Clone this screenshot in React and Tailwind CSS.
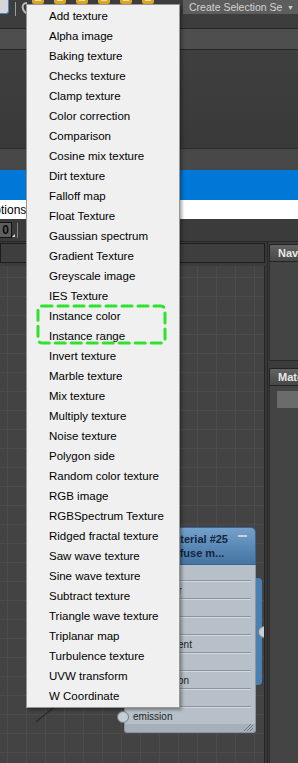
import React from 'react';

const menuItems = [
  'Add texture',
  'Alpha image',
  'Baking texture',
  'Checks texture',
  'Clamp texture',
  'Color correction',
  'Comparison',
  'Cosine mix texture',
  'Dirt texture',
  'Falloff map',
  'Float Texture',
  'Gaussian spectrum',
  'Gradient Texture',
  'Greyscale image',
  'IES Texture',
  'Instance color',
  'Instance range',
  'Invert texture',
  'Marble texture',
  'Mix texture',
  'Multiply texture',
  'Noise texture',
  'Polygon side',
  'Random color texture',
  'RGB image',
  'RGBSpectrum Texture',
  'Ridged fractal texture',
  'Saw wave texture',
  'Sine wave texture',
  'Subtract texture',
  'Triangle wave texture',
  'Triplanar map',
  'Turbulence texture',
  'UVW transform',
  'W Coordinate',
];

const nodeRows = ['base_color', 'reflection', 'roughness', 'displacement', 'opacity', 'transmission', 'bump', 'emission'];

const ToolIcon = () => (
  <svg width="14" height="14" viewBox="0 0 14 14" className="shrink-0">
    <rect x="1" y="1" width="12" height="12" rx="2" fill="#d9a52a" />
    <rect x="4" y="4" width="6" height="6" fill="#f4e08a" />
  </svg>
);

const NodeCard = () => (
  <div className="absolute left-[124px] top-[261px] w-[132px]">
    <div className="relative h-[38px] overflow-hidden rounded-t-[5px] border border-[#3b6590] bg-gradient-to-b from-[#74a1cb] to-[#4574a3] pl-[40px] pt-[4px] text-[11px] font-bold leading-[14px] text-[#13263d]">
      <div className="whitespace-nowrap">Material #25</div>
      <div className="whitespace-nowrap">Diffuse m...</div>
      <span className="absolute right-[8px] top-[7px] h-[2px] w-[9px] bg-[#c9d3dd]" />
    </div>
    <div className="border-x border-[#8a97a4] bg-[#b7c0c8] pt-[15px]">
      {nodeRows.map((label) => (
        <div key={label} className="mx-[4px] flex h-[18px] items-center whitespace-nowrap border-t border-[#8c959d] pl-[4px] pt-[2px] text-[10px] text-[#1c1f22] shadow-[inset_0_1px_0_#d3d9df]">
          {label}
        </div>
      ))}
    </div>
    <div className="relative h-[9px] rounded-b-[3px] border border-t-0 border-[#8793a0] bg-[#a7b0b8]">
      <svg width="12" height="7" viewBox="0 0 12 7" className="absolute bottom-[1px] right-[2px]">
        <path d="M3 7 L10 0 M6 7 L12 1 M9 7 L12 4" stroke="#6f7a85" strokeWidth="1" />
      </svg>
    </div>
    <div className="absolute left-[132px] top-[51px] h-[107px] w-[6px] rounded-r-[4px] bg-[#4a7fb1]" />
    <div className="absolute left-[134px] top-[99px] h-[12px] w-[12px] rounded-full border border-[#6f7f90] bg-[#c7ced6]" />
    <div className="absolute left-[-7px] top-[184px] h-[12px] w-[12px] rounded-full border border-[#6f7f90] bg-[#c5cdd5]" />
  </div>
);

export default function App() {
  return (
    <div className="relative h-[763px] w-[298px] overflow-hidden bg-[#3c3c3c] font-['Liberation_Sans',Arial,sans-serif]">
      {/* top toolbar */}
      <div className="flex h-[28px] items-start overflow-hidden bg-[#3d3d3d]">
        <div className="h-[14px] w-[9px] shrink-0 rounded-br-[3px] border-b border-r border-[#4d84d1] bg-[#d6d6d6]" />
        <div className="ml-[6px] mt-[2px] h-[14px] w-px shrink-0 bg-[#9c9c9c]" />
        <svg width="8" height="14" viewBox="0 0 8 14" className="ml-[5px] mt-[1px] shrink-0">
          <path d="M6 2 C2 2 1 5 2 8 C3 11 5 12 6 12" stroke="#b8b8b8" strokeWidth="2" fill="none" />
        </svg>
        <div className="ml-[2px] mt-[-9px] flex shrink-0 gap-[8px]">
          <ToolIcon />
          <ToolIcon />
          <ToolIcon />
          <ToolIcon />
          <ToolIcon />
          <ToolIcon />
        </div>
        <div className="ml-auto flex h-[14px] w-[115px] shrink-0 items-center bg-[#5d5d5d] pl-[6px] pr-[4px] text-[10.5px] leading-none text-[#d4d4d4]">
          <span className="whitespace-nowrap">Create Selection Se</span>
          <span className="ml-auto text-[7px] text-[#cfcfcf]">▼</span>
        </div>
      </div>
      <div className="h-px bg-[#262626]" />
      <div className="h-[20px] bg-[#4e4e4e]" />
      <div className="h-px bg-[#262626]" />
      <div className="h-[98px] bg-gradient-to-b from-[#3f3f3f] to-[#393939]" />
      <div className="h-px bg-[#2c2c2c]" />
      <div className="h-[21px] bg-[#484848]" />
      <div className="h-[30px] bg-[#0078d7]" />
      <div className="flex h-[19px] items-center overflow-hidden bg-white">
        <span className="ml-[-15px] whitespace-nowrap text-[12px] leading-none text-black">Options:</span>
      </div>
      <div className="flex h-[22px] items-center bg-[#3b3b3b]">
        <div className="relative ml-[-3px] flex h-[16px] w-[15px] items-center justify-end border border-[#111] bg-[#5e5e5e] pr-[2px] text-[12px] font-bold leading-none text-[#0a0a0a]">
          0
          <span className="absolute bottom-0 right-[-4px] h-0 w-0 border-r-[3px] border-t-[3px] border-r-[#dcdcdc] border-t-transparent" />
        </div>
        <div className="ml-[5px] h-[15px] w-px bg-[#808080]" />
      </div>
      <div className="h-px bg-[#262626]" />

      {/* main area */}
      <div className="flex h-[521px]">
        <div className="flex w-[265px] shrink-0 flex-col">
          <div className="h-px" />
          <div className="flex h-[20px] border border-[#1c1c1c] bg-[#3e3e3e]">
            <div className="ml-[66px] w-px bg-[#353535]" />
          </div>
          <div className="h-[3px]" />
          <div className="relative flex-1 overflow-hidden border-r border-[#262626] bg-[#434343] bg-[linear-gradient(to_right,#4c4c4c_1px,transparent_1px),linear-gradient(to_bottom,#4c4c4c_1px,transparent_1px)] bg-[size:19px_19px] bg-[position:7px_11px]">
            <svg width="80" height="480" viewBox="0 0 80 480" className="absolute left-0 top-0">
              <path d="M36 456 Q44 449 56 440" stroke="#2b2b2b" strokeWidth="1.5" fill="none" />
            </svg>
            <NodeCard />
          </div>
        </div>
        <div className="w-[3px] shrink-0 border-r border-[#262626] bg-[#383838]" />
        <div className="flex min-w-0 flex-1 flex-col overflow-hidden bg-[#3c3c3c]">
          <div className="ml-px mt-[2px] flex h-[18px] items-center overflow-hidden whitespace-nowrap rounded-tl-[2px] border border-r-0 border-[#222] bg-gradient-to-b from-[#626262] to-[#484848] pl-[8px] text-[11px] font-bold leading-none text-[#e8e8e8]">
            Navigator
          </div>
          <div className="ml-px h-[99px] border-b border-l border-[#2a2a2a] bg-[#444]" />
          <div className="h-[7px]" />
          <div className="ml-px flex h-[18px] items-center overflow-hidden whitespace-nowrap rounded-tl-[2px] border border-r-0 border-[#222] bg-gradient-to-b from-[#626262] to-[#484848] pl-[8px] text-[11px] font-bold leading-none text-[#e8e8e8]">
            Material Parameter Editor
          </div>
          <div className="ml-px flex-1 border-l border-[#2a2a2a] bg-[#444] pt-[5px]">
            <div className="ml-[7px] h-[17px] bg-[#6b6b6b]" />
          </div>
        </div>
      </div>

      {/* context menu */}
      <div className="absolute left-[26px] top-[4px] w-[154px] border border-[#979797] bg-[#f0f0f0] pt-[2px] shadow-[2px_2px_3px_rgba(0,0,0,0.35)]">
        {menuItems.map((item) => (
          <div key={item} className="flex h-[20px] items-center whitespace-nowrap pl-[22px] text-[11.5px] leading-none text-black">
            {item}
          </div>
        ))}
      </div>

      {/* highlight annotation */}
      <svg width="132" height="42" viewBox="0 0 132 42" className="absolute left-[36px] top-[304px]">
        <rect x="2" y="2" width="127" height="37" rx="4" fill="none" stroke="#2fe22f" strokeWidth="3" strokeDasharray="10 6" strokeLinecap="round" />
      </svg>
    </div>
  );
}
